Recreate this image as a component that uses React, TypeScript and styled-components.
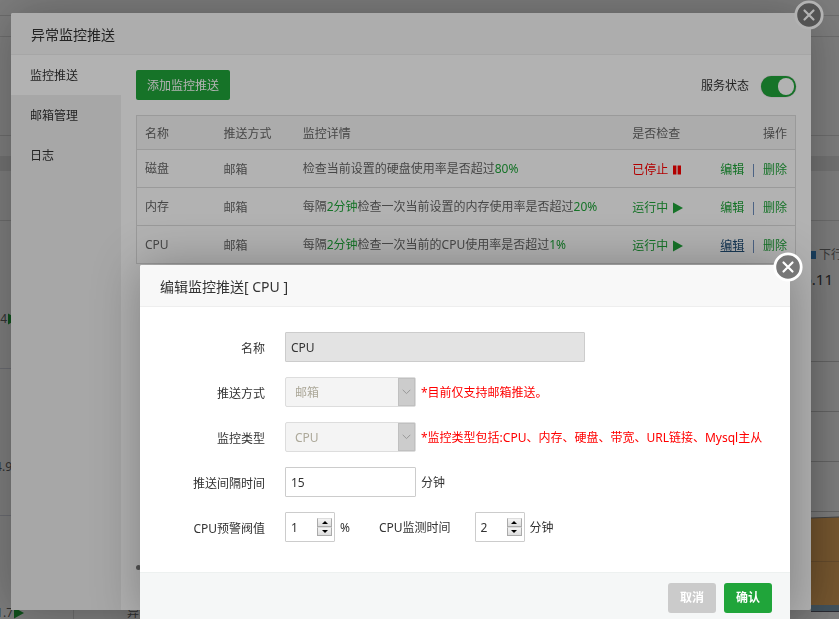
import React from "react";
import styled, { createGlobalStyle, css } from "styled-components";

const GlobalStyle = createGlobalStyle`
  *, *::before, *::after { box-sizing: border-box; }
  body {
    margin: 0;
    overflow: hidden;
    background: #fff;
    color: #333;
    font: 12px/18px "Noto Sans", "Noto Sans CJK SC", sans-serif;
  }
  button, input, select { font: inherit; color: inherit; }
`;

/* ---------- Dashboard behind the dialogs ---------- */

const Dashboard = styled.main`
  height: 100vh;
  overflow: hidden;
  display: flex;
  flex-direction: column;
`;

const Band = styled.div<{ $height: number; $line?: boolean; $fill?: string }>`
  flex: none;
  height: ${(p) => p.$height}px;
  background: ${(p) => p.$fill ?? "#fff"};
  border-bottom: ${(p) => (p.$line ? "1px solid #ddd" : "0")};
`;

const Columns = styled.div`
  flex: 1;
  display: flex;
  justify-content: space-between;
  min-height: 0;
`;

const LeftPanel = styled.section`
  width: 160px;
`;

const TrafficRow = styled.div<{ $height: number }>`
  height: ${(p) => p.$height}px;
  display: flex;
  align-items: center;
  padding-top: 49px;
  gap: 1px;
  border-bottom: 1px solid #d8dae6;
  color: #666;
`;

const Value = styled.span<{ $w: number }>`
  flex: none;
  display: flex;
  justify-content: flex-end;
  width: ${(p) => p.$w}px;
`;

const BottomRow = styled.div`
  display: flex;
  align-items: center;
  height: 20px;
  margin-top: 87px;
  gap: 1px;
  color: #666;
`;

const BottomCell = styled.span`
  border-left: 1px solid #ddd;
  margin-left: 48px;
  padding-left: 53px;
  line-height: 20px;
  white-space: nowrap;
`;

const RightPanel = styled.section`
  width: 28px;
  display: flex;
  flex-direction: column;
`;

const Legend = styled.div`
  height: 140px;
  padding-top: 24px;
  color: #777;
`;

const LegendKey = styled.div`
  display: flex;
  align-items: center;
  gap: 3px;
  height: 20px;
  white-space: nowrap;
`;

const Swatch = styled.i`
  flex: none;
  width: 5px;
  height: 8px;
  background: #3b8bd0;
`;

const Rate = styled.div`
  display: flex;
  justify-content: flex-end;
  padding-right: 6px;
  margin-top: 2px;
  color: #444;
  font-size: 15px;
  line-height: 24px;
`;

const Chart = styled.svg`
  display: block;
  width: 100%;
  height: 258px;
`;

/* ---------- Dialog parts ---------- */

const Shade = styled.div<{ $pad: string }>`
  position: fixed;
  inset: 0;
  display: flex;
  align-items: stretch;
  padding: ${(p) => p.$pad};
  background: rgba(0, 0, 0, 0.3);
`;

const Dialog = styled.section`
  position: relative;
  flex: 1;
  min-width: 0;
  display: flex;
  flex-direction: column;
  background: #fff;
  border-radius: 2px;
  box-shadow: 1px 1px 50px rgba(0, 0, 0, 0.3);
`;

const DialogTitle = styled.h2`
  margin: 0;
  flex: none;
  height: 42px;
  padding: 0 20px;
  border-bottom: 1px solid #eee;
  border-radius: 2px 2px 0 0;
  background: #f8f8f8;
  font-size: 14px;
  font-weight: 400;
  line-height: 43px;
`;

const CloseButton = styled.button`
  position: absolute;
  top: -13px;
  right: -13px;
  width: 30px;
  height: 30px;
  padding: 0;
  border: 0;
  background: none;
  svg { display: block; }
`;

const Close = () => (
  <CloseButton type="button" aria-label="关闭">
    <svg width="30" height="30" viewBox="0 0 30 30">
      <circle cx="15" cy="15" r="13.2" fill="#777" stroke="#fff" strokeWidth="2.8" />
      <path d="M10.5 10.5l9 9M19.5 10.5l-9 9" stroke="#fff" strokeWidth="2.2" strokeLinecap="round" />
    </svg>
  </CloseButton>
);

const DialogBody = styled.div`
  flex: 1;
  display: flex;
  min-height: 0;
`;

const Tabs = styled.nav`
  flex: none;
  width: 110px;
  background: #f0f0f0;
`;

const Tab = styled.button<{ $active?: boolean }>`
  display: block;
  width: 100%;
  height: 40px;
  padding: 2px 0 0 19px;
  border: 0;
  text-align: left;
  background: ${(p) => (p.$active ? "#fff" : "transparent")};
`;

const Content = styled.div`
  flex: 1;
  min-width: 0;
  display: flex;
  flex-direction: column;
  padding: 15px 15px 40px;
`;

const Toolbar = styled.div`
  display: flex;
  justify-content: space-between;
  align-items: center;
  margin-bottom: 15px;
`;

const Button = styled.button<{ $muted?: boolean; $strong?: boolean }>`
  height: 30px;
  padding: ${(p) => (p.$strong ? "0 12px" : "2px 11px 0")};
  border: 0;
  border-radius: ${(p) => (p.$strong ? 3 : 2)}px;
  background: ${(p) => (p.$muted ? "#cbcbcb" : "#20a53a")};
  color: #fff;
  font-weight: ${(p) => (p.$strong ? 700 : 400)};
`;

const ServiceState = styled.label`
  display: flex;
  align-items: center;
  gap: 12px;
  padding-top: 2px;
`;

const Switch = styled.input`
  appearance: none;
  margin: 0;
  width: 35px;
  height: 21px;
  padding: 2px;
  border-radius: 11px;
  background: #20a53a;
  display: flex;
  justify-content: flex-end;
  box-shadow: 0 0 1px #888;
  &::after {
    content: "";
    width: 16px;
    height: 17px;
    border-radius: 9px;
    background: #fff;
  }
`;

const Table = styled.table`
  width: 100%;
  table-layout: fixed;
  border-collapse: collapse;
  border: 1px solid #ddd;
  color: #666;
`;

const Col = styled.col<{ $w: string }>`
  width: ${(p) => p.$w};
`;

const cell = css`
  padding: 0 8px;
  border-bottom: 1px solid #ddd;
  text-align: left;
  font-weight: 400;
  white-space: nowrap;
`;

const Th = styled.th<{ $right?: boolean }>`
  ${cell}
  height: 34px;
  padding-top: 2px;
  background: #f6f6f6;
  text-align: ${(p) => (p.$right ? "right" : "left")};
`;

const Td = styled.td<{ $low?: boolean }>`
  ${cell}
  height: 38px;
  padding-top: ${(p) => (p.$low ? 2 : 0)}px;
`;

const Em = styled.span`
  color: #20a53a;
`;

const State = styled.a<{ $stopped?: boolean }>`
  display: flex;
  align-items: center;
  gap: 5px;
  text-decoration: none;
  color: ${(p) => (p.$stopped ? "#f00" : "#20a53a")};
`;

const Action = styled.a<{ $hovered?: boolean }>`
  color: ${(p) => (p.$hovered ? "#23527c" : "#20a53a")};
  text-decoration: ${(p) => (p.$hovered ? "underline" : "none")};
`;

const Actions = styled.div`
  display: flex;
  justify-content: flex-end;
  gap: 6px;
`;

const Bar = styled.span`
  color: #5b7fb5;
`;

const NoteDot = styled.i`
  width: 5px;
  height: 5px;
  margin-top: auto;
  border-radius: 50%;
  background: #777;
`;

/* ---------- Edit form ---------- */

const Form = styled.form`
  display: flex;
  flex-direction: column;
`;

const Fields = styled.div`
  display: flex;
  flex-direction: column;
  gap: 15px;
  padding: 25px 0 30px;
`;

const Row = styled.div`
  display: flex;
  align-items: center;
  gap: 5px;
  height: 30px;
`;

const Label = styled.label`
  flex: none;
  width: 125px;
  margin-right: 15px;
  padding-top: 4px;
  text-align: right;
`;

const InlineLabel = styled.label`
  margin: 0 19px 0 24px;
  padding-top: 2px;
`;

const Unit = styled.span`
  padding-top: 2px;
`;

const TextInput = styled.input<{ $w: number }>`
  width: ${(p) => p.$w}px;
  height: 30px;
  padding: 0 5px;
  border: 1px solid #ccc;
  border-radius: 1px;
  background: #fff;
  &:disabled { background: #e3e3e3; color: #333; }
`;

const SelectBox = styled.span`
  display: flex;
  width: 131px;
  height: 30px;
  border: 1px solid #ddd;
  border-radius: 2px;
  background: #f4f4f4;
`;

const Select = styled.select`
  flex: 1;
  min-width: 0;
  appearance: none;
  padding: 2px 9px 0;
  border: 0;
  background: none;
  &:disabled { color: #aca899; opacity: 1; }
`;

const SelectArrow = styled.span`
  width: 17px;
  display: flex;
  align-items: center;
  justify-content: center;
  border: 1px solid #c0c0c0;
  background: #ccc;
`;

const NumberBox = styled.span`
  display: flex;
  align-items: center;
  width: 50px;
  height: 30px;
  padding-right: 2px;
  border: 1px solid #ccc;
  border-radius: 1px;
`;

const NumberInput = styled.input`
  flex: 1;
  min-width: 0;
  height: 28px;
  padding: 0 5px;
  border: 0;
  background: none;
  appearance: textfield;
  &::-webkit-inner-spin-button { display: none; }
`;

const Spinner = styled.span`
  display: flex;
  flex-direction: column;
  flex: none;
  width: 15px;
`;

const Step = styled.button`
  display: flex;
  align-items: center;
  justify-content: center;
  height: 9px;
  padding: 0;
  border: 1px solid #aaa;
  border-top-color: #ddd;
  background: linear-gradient(#f4f4f4, #ddd);
`;

const Hint = styled.span`
  padding-top: 2px;
  color: #f00;
  white-space: nowrap;
`;

const Footer = styled.footer`
  display: flex;
  justify-content: flex-end;
  gap: 8px;
  padding: 10px 18px;
  border-top: 1px solid #edf1f0;
  background: #f5f7f7;
`;

const Triangle = () => (
  <svg width="10" height="12" viewBox="0 0 10 12">
    <path d="M0 0.5L10 6L0 11.5Z" fill="#20a53a" />
  </svg>
);

const Pause = () => (
  <svg width="8" height="10" viewBox="0 0 8 10">
    <path d="M0 0.5h3.4v9H0zM4.6 0.5h3.4v9H4.6z" fill="#f00" />
  </svg>
);

const DropDown = ({ id, value }: { id: string; value: string }) => (
  <SelectBox>
    <Select id={id} disabled defaultValue={value}>
      <option>{value}</option>
    </Select>
    <SelectArrow>
      <svg width="9" height="6" viewBox="0 0 9 6">
        <path d="M0.7 0.8L4.5 4.6L8.3 0.8" fill="none" stroke="#999" />
      </svg>
    </SelectArrow>
  </SelectBox>
);

const NumberField = ({ id, value }: { id: string; value: number }) => (
  <NumberBox>
    <NumberInput id={id} type="number" defaultValue={value} />
    <Spinner>
      <Step type="button" aria-label="增加">
        <svg width="6" height="3" viewBox="0 0 6 3"><path d="M0 3L3 0L6 3Z" fill="#000" /></svg>
      </Step>
      <Step type="button" aria-label="减少">
        <svg width="6" height="3" viewBox="0 0 6 3"><path d="M0 0L3 3L6 0Z" fill="#000" /></svg>
      </Step>
    </Spinner>
  </NumberBox>
);

type Monitor = {
  name: string;
  detail: React.ReactNode;
  running: boolean;
  hovered?: boolean;
};

const monitors: Monitor[] = [
  { name: "磁盘", detail: <>检查当前设置的硬盘使用率是否超过<Em>80%</Em></>, running: false },
  {
    name: "内存",
    detail: <>每隔<Em>2分钟</Em>检查一次当前设置的内存使用率是否超过<Em>20%</Em></>,
    running: true,
  },
  {
    name: "CPU",
    detail: <>每隔<Em>2分钟</Em>检查一次当前的CPU使用率是否超过<Em>1%</Em></>,
    running: true,
    hovered: true,
  },
];

export default function App() {
  return (
    <>
      <GlobalStyle />
      <Dashboard>
        <Band $height={16} $line />
        <Band $height={21} $line />
        <Band $height={99} $line />
        <Band $height={20} />
        <Band $height={15} $fill="#e8e8e8" />
        <Band $height={50} $line />
        <Columns>
          <LeftPanel>
            <TrafficRow $height={148}><Value $w={7}>4</Value><Triangle /></TrafficRow>
            <TrafficRow $height={147}><Value $w={12}>4.9</Value><Triangle /></TrafficRow>
            <BottomRow>
              <Value $w={13}>1.7</Value><Triangle />
              <BottomCell>异常</BottomCell>
            </BottomRow>
          </LeftPanel>
          <RightPanel>
            <Legend>
              <LegendKey><Swatch />下行</LegendKey>
              <Rate>6.11</Rate>
            </Legend>
            <Chart viewBox="0 0 28 258" preserveAspectRatio="none">
              <path d="M0 157L28 156V244H0Z" fill="#f0b060" />
              <path d="M0 244H28V250H0Z" fill="#86a8bd" />
              <path d="M0 0.5H28M0 50.5H28M0 100.5H28M0 150.5H28" stroke="#ccc" />
              <path d="M0 157L28 156" stroke="#888" />
              <path d="M0 200.5H28" stroke="#cf9a5a" />
              <path d="M0 250.5H28" stroke="#556" />
            </Chart>
          </RightPanel>
        </Columns>
      </Dashboard>

      <Shade $pad="13px 28px 9px 11px">
        <Dialog role="dialog" aria-label="异常监控推送">
          <DialogTitle>异常监控推送</DialogTitle>
          <Close />
          <DialogBody>
            <Tabs>
              <Tab $active>监控推送</Tab>
              <Tab>邮箱管理</Tab>
              <Tab>日志</Tab>
            </Tabs>
            <Content>
              <Toolbar>
                <Button type="button">添加监控推送</Button>
                <ServiceState>
                  服务状态
                  <Switch type="checkbox" defaultChecked />
                </ServiceState>
              </Toolbar>
              <Table>
                <colgroup>
                  <Col $w="12%" />
                  <Col $w="12%" />
                  <Col $w="50%" />
                  <Col $w="11%" />
                  <Col $w="15%" />
                </colgroup>
                <thead>
                  <tr>
                    <Th>名称</Th>
                    <Th>推送方式</Th>
                    <Th>监控详情</Th>
                    <Th>是否检查</Th>
                    <Th $right>操作</Th>
                  </tr>
                </thead>
                <tbody>
                  {monitors.map((m) => (
                    <tr key={m.name}>
                      <Td>{m.name}</Td>
                      <Td $low>邮箱</Td>
                      <Td>{m.detail}</Td>
                      <Td $low>
                        <State href="#" $stopped={!m.running}>
                          {m.running ? "运行中" : "已停止"}
                          {m.running ? <Triangle /> : <Pause />}
                        </State>
                      </Td>
                      <Td $low>
                        <Actions>
                          <Action href="#" $hovered={m.hovered}>编辑</Action>
                          <Bar>|</Bar>
                          <Action href="#">删除</Action>
                        </Actions>
                      </Td>
                    </tr>
                  ))}
                </tbody>
              </Table>
              <NoteDot />
            </Content>
          </DialogBody>
        </Dialog>
      </Shade>

      <Shade $pad="265px 49px 0 140px">
        <Dialog role="dialog" aria-label="编辑监控推送">
          <DialogTitle>编辑监控推送[ CPU ]</DialogTitle>
          <Close />
          <Form>
            <Fields>
              <Row>
                <Label htmlFor="name">名称</Label>
                <TextInput id="name" $w={300} defaultValue="CPU" disabled />
              </Row>
              <Row>
                <Label htmlFor="channel">推送方式</Label>
                <DropDown id="channel" value="邮箱" />
                <Hint>*目前仅支持邮箱推送。</Hint>
              </Row>
              <Row>
                <Label htmlFor="kind">监控类型</Label>
                <DropDown id="kind" value="CPU" />
                <Hint>*监控类型包括:CPU、内存、硬盘、带宽、URL链接、Mysql主从</Hint>
              </Row>
              <Row>
                <Label htmlFor="interval">推送间隔时间</Label>
                <TextInput id="interval" $w={131} defaultValue="15" />
                <Unit>分钟</Unit>
              </Row>
              <Row>
                <Label htmlFor="threshold">CPU预警阀值</Label>
                <NumberField id="threshold" value={1} />
                <Unit>%</Unit>
                <InlineLabel htmlFor="period">CPU监测时间</InlineLabel>
                <NumberField id="period" value={2} />
                <Unit>分钟</Unit>
              </Row>
            </Fields>
            <Footer>
              <Button type="button" $muted $strong>取消</Button>
              <Button type="button" $strong>确认</Button>
            </Footer>
          </Form>
        </Dialog>
      </Shade>
    </>
  );
}
